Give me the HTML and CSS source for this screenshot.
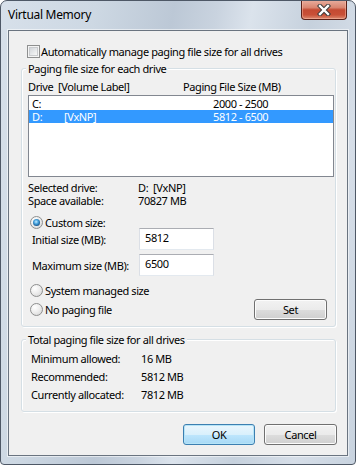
FILE: index.html
```html
<!DOCTYPE html>
<html>
<head>
<meta charset="utf-8">
<link rel="stylesheet" href="styles.css">
</head>
<body>
<div class="window">
  <div class="titlebar">
    <span class="title">Virtual Memory</span>
    <div class="close">
      <svg width="14" height="12" viewBox="0 0 14 12">
        <path d="M3 2 L11 10 M11 2 L3 10" stroke="#3a3a3a" stroke-width="4.4" stroke-linecap="square"/>
        <path d="M3 2 L11 10 M11 2 L3 10" stroke="#ffffff" stroke-width="2.4" stroke-linecap="square"/>
      </svg>
    </div>
  </div>
  <div class="client">
    <div class="check-row">
      <span class="checkbox"></span>
      <span class="check-label">Automatically manage paging file size for all drives</span>
    </div>

    <div class="group group-drives">
      <div class="legend">Paging file size for each drive</div>
      <div class="list-head">
        <span class="head-drive">Drive&nbsp;&nbsp;[Volume Label]</span>
        <span>Paging File Size (MB)</span>
      </div>
      <div class="listbox">
        <div class="row"><span class="c-drive">C:</span><span class="c-label"></span><span>2000 - 2500</span></div>
        <div class="row sel"><span class="c-drive">D:</span><span class="c-label">[VxNP]</span><span>5812 - 6500</span></div>
      </div>
      <div class="info info-first"><span class="info-label">Selected drive:</span><span>D:&nbsp;&nbsp;[VxNP]</span></div>
      <div class="info"><span class="info-label">Space available:</span><span>70827 MB</span></div>

      <div class="radio-row radio-custom"><span class="radio on"></span><span class="radio-label">Custom size:</span></div>
      <div class="field"><span class="field-label">Initial size (MB):</span><span class="input">5812</span></div>
      <div class="field field-max"><span class="field-label">Maximum size (MB):</span><span class="input">6500</span></div>
      <div class="radio-row radio-system"><span class="radio"></span><span class="radio-label">System managed size</span></div>
      <div class="radio-row radio-none">
        <span class="radio"></span><span class="radio-label">No paging file</span>
        <span class="btn btn-set">Set</span>
      </div>
    </div>

    <div class="group group-total">
      <div class="legend">Total paging file size for all drives</div>
      <div class="total-row total-first"><span class="total-label">Minimum allowed:</span><span>16 MB</span></div>
      <div class="total-row"><span class="total-label">Recommended:</span><span>5812 MB</span></div>
      <div class="total-row"><span class="total-label">Currently allocated:</span><span>7812 MB</span></div>
    </div>

    <div class="buttons">
      <span class="btn btn-ok">OK</span>
      <span class="btn btn-cancel">Cancel</span>
    </div>
  </div>
</div>
</body>
</html>
```

FILE: styles.css
```css
html, body {
  margin: 0;
  padding: 0;
  background: #ffffff;
}

body {
  font-family: "Noto Sans", "Open Sans", sans-serif;
  font-size: 11px;
  letter-spacing: -0.4px;
  color: #000000;
}

.window {
  width: 356px;
  height: 465px;
  box-sizing: border-box;
  border: 1px solid #4e5866;
  border-radius: 7px 7px 4px 4px;
  background: linear-gradient(100deg, #d7e0ea 0%, #cdd8e3 22%, #bcc8d6 40%, #c9d3df 50%, #dbe3ec 58%, #c6d1dd 72%, #d6dee8 86%, #c8d3df 100%);
  display: flex;
  flex-direction: column;
  overflow: hidden;
}

.titlebar {
  height: 29px;
  flex: none;
  display: flex;
  align-items: flex-start;
}

.title {
  margin: 6px 0 0 7px;
  line-height: 16px;
  font-size: 12px;
  letter-spacing: -0.3px;
  color: #000;
}

.close {
  margin-left: auto;
  margin-right: 8px;
  margin-top: -1px;
  width: 46px;
  height: 20px;
  box-sizing: border-box;
  border: 1px solid #5a2018;
  border-top: none;
  border-radius: 0 0 4px 4px;
  background: linear-gradient(#e9b0a0 0%, #d98570 40%, #c44a32 52%, #c95037 78%, #dc8a70 100%);
  box-shadow: inset 0 0 0 1px rgba(255, 200, 180, 0.45);
  display: flex;
  align-items: center;
  justify-content: center;
}

.client {
  flex: 1;
  margin: 0 7px 8px 7px;
  border: 1px solid #6a7480;
  box-shadow: 0 0 0 1px rgba(255, 255, 255, 0.55);
  background: #f0f0f0;
  padding: 0 11px 0 12px;
  display: flex;
  flex-direction: column;
}

/* top checkbox */
.check-row {
  margin: 14px 0 0 6px;
  height: 13px;
  display: flex;
  align-items: center;
  line-height: 13px;
}

.checkbox {
  width: 13px;
  height: 13px;
  flex: none;
  box-sizing: border-box;
  border: 1px solid #8e8f8f;
  background: #f4f4f4;
  display: flex;
  align-items: center;
  justify-content: center;
}

.checkbox::after {
  content: "";
  width: 9px;
  height: 9px;
  box-sizing: border-box;
  border: 1px solid #c9cbce;
  background: linear-gradient(135deg, #d3d6da 0%, #e6e8ea 55%, #f7f7f7 100%);
}

.check-label {
  margin-left: 1px;
}

/* group boxes */
.group {
  border: 1px solid #d5dfe5;
  border-radius: 3px;
  box-shadow: inset 1px 1px 0 #ffffff, 1px 1px 0 #ffffff;
  display: flex;
  flex-direction: column;
}

.group-drives {
  margin-top: 10px;
  padding-bottom: 6px;
}

.group-total {
  margin-top: 12px;
  padding-bottom: 7px;
}

.legend {
  width: max-content;
  margin: -8px 0 0 4px;
  padding: 0 2px;
  background: #f0f0f0;
  line-height: 15px;
  height: 15px;
}

.list-head {
  margin-top: 3px;
  height: 15px;
  line-height: 15px;
  padding-left: 6px;
  display: flex;
}

.head-drive {
  width: 155px;
}

.listbox {
  margin: 1px 1px 0 6px;
  height: 82px;
  box-sizing: border-box;
  border: 1px solid #828790;
  background: #ffffff;
  padding-top: 1px;
}

.row {
  height: 13px;
  line-height: 13px;
  padding-left: 3px;
  display: flex;
}

.row.sel {
  background: #3399ff;
  color: #ffffff;
}

.c-drive {
  width: 32px;
}

.c-label {
  width: 149px;
}

.info {
  height: 13px;
  line-height: 13px;
  padding-left: 6px;
  display: flex;
}

.info-first {
  margin-top: 4px;
}

.info-label {
  width: 110px;
}

/* radios */
.radio-row {
  display: flex;
  align-items: center;
  padding-left: 8px;
  height: 13px;
  line-height: 13px;
}

.radio-custom {
  margin-top: 9px;
  height: 12px;
}

.radio-system {
  margin-top: 8px;
}

.radio-none {
  margin-top: 2px;
  height: 21px;
  padding-right: 8px;
}

.radio {
  width: 13px;
  height: 13px;
  flex: none;
  box-sizing: border-box;
  border-radius: 50%;
  border: 1px solid #8e8f8f;
  background: radial-gradient(circle at 35% 30%, #ffffff 0%, #eeeeee 45%, #d2d2d2 100%);
  display: flex;
  align-items: center;
  justify-content: center;
}

.radio.on::after {
  content: "";
  width: 7px;
  height: 7px;
  border-radius: 50%;
  background: radial-gradient(circle at 45% 40%, #c8ecff 0%, #4aa6e0 35%, #1b5c94 70%, #0c2f52 100%);
}

.radio-label {
  margin-left: 2px;
}

/* text fields */
.field {
  display: flex;
  align-items: center;
  height: 22px;
  padding-left: 10px;
}

.field-max {
  margin-top: 4px;
}

.field-label {
  width: 107px;
}

.input {
  width: 75px;
  height: 22px;
  box-sizing: border-box;
  border: 1px solid #dbdfe6;
  border-top-color: #abadb3;
  border-bottom-color: #e3e9ef;
  background: #ffffff;
  padding: 0 0 0 5px;
  line-height: 18px;
}

/* buttons */
.btn {
  box-sizing: border-box;
  height: 21px;
  border: 1px solid #707070;
  border-radius: 3px;
  background: linear-gradient(#f2f2f2 0%, #ebebeb 50%, #dddddd 51%, #cfcfcf 100%);
  box-shadow: inset 0 0 0 1px #fcfcfc;
  display: flex;
  align-items: center;
  justify-content: center;
  line-height: 15px;
}

.btn-set {
  margin-left: auto;
  width: 73px;
}

.buttons {
  margin: 12px -1px 0 0;
  display: flex;
  justify-content: flex-end;
  gap: 9px;
}

.btn-ok {
  width: 72px;
  border-color: #3c7fb1;
  background: linear-gradient(#eaf6fd 0%, #d9f0fc 50%, #bee6fd 51%, #a7d9f5 100%);
  box-shadow: inset 0 0 0 1px #b6e4f7;
}

.btn-cancel {
  width: 73px;
}

/* totals */
.total-row {
  height: 18px;
  line-height: 18px;
  padding-left: 9px;
  display: flex;
}

.total-first {
  margin-top: 3px;
}

.total-label {
  width: 110px;
}
```
